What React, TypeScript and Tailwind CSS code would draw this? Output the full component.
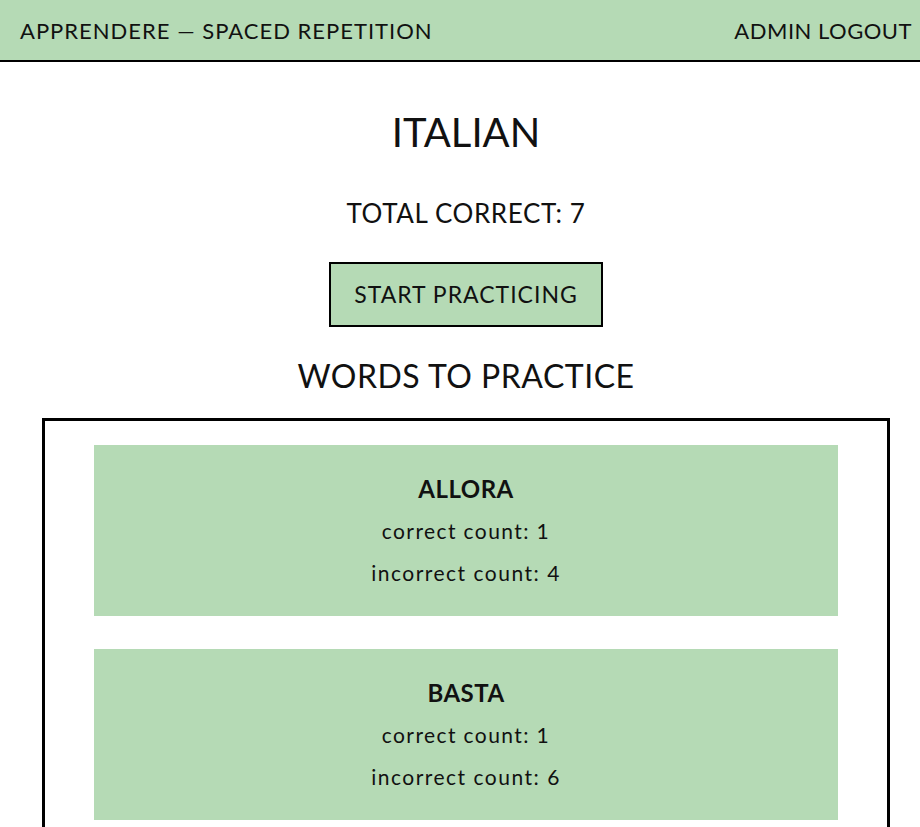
import { useState } from 'react';

type Word = {
  word: string;
  correct: number;
  incorrect: number;
};

const WORDS: Word[] = [
  { word: 'ALLORA', correct: 1, incorrect: 4 },
  { word: 'BASTA', correct: 1, incorrect: 6 },
  { word: 'CIAO', correct: 2, incorrect: 3 },
];

export default function App() {
  const [words] = useState<Word[]>(WORDS);
  const total = 7;

  return (
    <div className="min-h-screen bg-white text-[#111] font-['Lato',sans-serif]">
      <header className="h-[62px] flex items-center justify-between pl-5 pr-2 bg-[#b5dab5] border-b-2 border-black">
        <span className="text-[22px] tracking-[1px]">APPRENDERE — SPACED REPETITION</span>
        <span className="text-[22px] tracking-[0.5px]">ADMIN LOGOUT</span>
      </header>

      <main className="flex flex-col items-center pl-[12px]">
        <h1 className="mt-[46px] text-[40px] leading-[48px]">ITALIAN</h1>
        <h2 className="mt-[41px] text-[26px] leading-[32px] tracking-[0.6px]">TOTAL CORRECT: {total}</h2>
        <button className="mt-[33px] w-[274px] h-[65px] border-2 border-black bg-[#b5dab5] text-[23px] tracking-[1px]">
          START PRACTICING
        </button>
        <h3 className="mt-[29px] text-[32px] leading-[40px] tracking-[0.5px]">WORDS TO PRACTICE</h3>

        <section className="mt-[22px] w-[848px] border-[3px] border-black px-[49px] pt-[24px] pb-[24px] flex flex-col gap-[33px]">
          {words.map((w) => (
            <div key={w.word} className="h-[171px] bg-[#b5dab5] flex flex-col items-center justify-center">
              <div className="text-[24px] font-bold leading-[42px] tracking-[0.5px]">{w.word}</div>
              <div className="text-[21px] leading-[42px] tracking-[1.4px]">correct count: {w.correct}</div>
              <div className="text-[21px] leading-[42px] tracking-[1.5px]">incorrect count: {w.incorrect}</div>
            </div>
          ))}
        </section>
      </main>
    </div>
  );
}
